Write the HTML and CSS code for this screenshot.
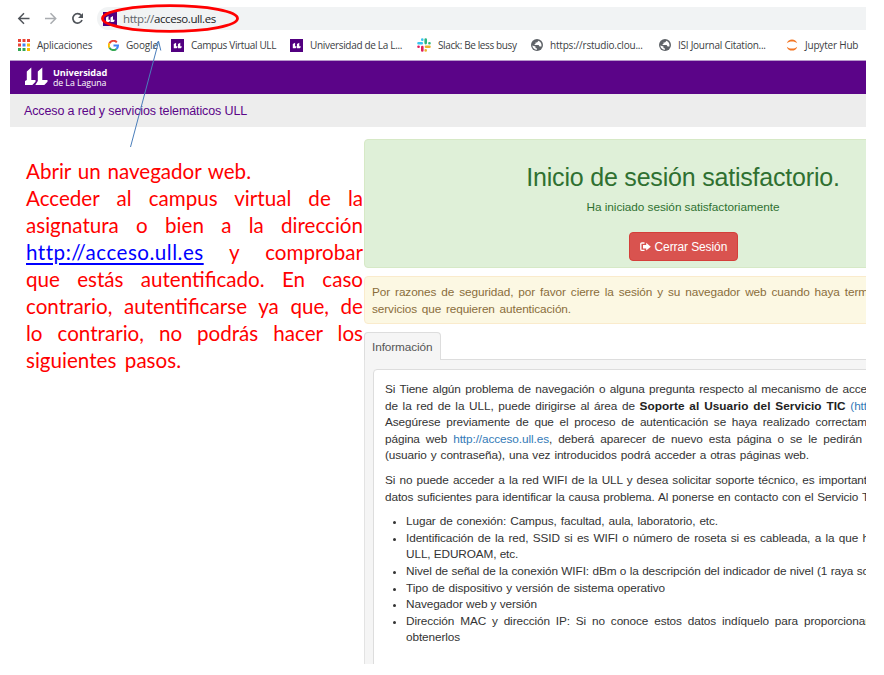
FILE: index.html
```html
<!DOCTYPE html>
<html lang="es">
<head>
<meta charset="utf-8">
<title>Acceso a red y servicios telemáticos ULL</title>
<link rel="stylesheet" href="styles.css">
</head>
<body>
<svg class="defs" width="0" height="0">
  <symbol id="ull" viewBox="0 0 14 14"><path fill="#520080" d="M0 0h14v14H0z"/><path fill="#fff" d="M5.500 4v3.700H7V9L6 10H3V5.500zM10 4v3.700h1.500V9l-1 1h-3V5.500z"/></symbol>
  <symbol id="globe" viewBox="0 0 12 12"><circle cx="6" cy="6" r="6" fill="#5f6368"/><path fill="#fff" d="M1.300 6.500L4.500 7.500V9L6 9.500v1.200C3.500 10.700 1.500 9 1.300 6.500zM7.500 1.700L6 3.500H4.500v1.500H3.600v1h4l1 1.500h1.800C11 5 9.700 2.500 7.500 1.700z"/></symbol>
</svg>
<div class="screen">
  <div class="toolbar">
    <svg class="nav" width="87" height="24" viewBox="0 0 87 24" fill="none" stroke-width="1.500">
      <path stroke="#50545a" d="M19.500 11.500H9M14 6.300l-5.200 5.200 5.200 5.200"/>
      <path stroke="#a9acb0" d="M35 11.500h10.500M40.500 6.300l5.200 5.200-5.200 5.200"/>
      <path stroke="#50545a" stroke-width="1.700" d="M71.300 8.500A4.700 4.700 0 1 0 72 13"/>
      <path fill="#50545a" d="M73 6v5h-5z"/>
    </svg>
    <div class="omnibox"><svg width="14" height="14"><use href="#ull"/></svg><span class="url"><i>http://</i>acceso.ull.es</span></div>
  </div>
  <div class="bookmarks">
    <div class="bm b1"><svg width="12" height="12" viewBox="0 0 12 12"><path fill="#ea4335" d="M0 0h3v3H0zM4.500 0h3v3h-3zM9 0h3v3H9zM0 4.500h3v3H0z"/><path fill="#34a853" d="M0 9h3v3H0zM4.500 9h3v3h-3z"/><path fill="#4285f4" d="M4.500 4.500h3v3h-3z"/><path fill="#fbbc05" d="M9 4.500h3v3H9zM9 9h3v3H9z"/></svg><span>Aplicaciones</span></div>
    <div class="bm b2"><svg width="11" height="11" viewBox="0 0 11 11" fill="none" stroke-width="2"><path stroke="#ea4335" d="M1.400 3.400A4.500 4.500 0 0 1 8.800 2.300"/><path stroke="#fbbc05" d="M1.400 3.300a4.500 4.500 0 0 0 0 4.400"/><path stroke="#34a853" d="M1.400 7.600a4.500 4.500 0 0 0 7 1.300"/><path stroke="#4285f4" d="M5.500 5.600h4.500a4.500 4.500 0 0 1-1.600 3.300"/></svg><span>Google</span></div>
    <div class="bm b3"><svg width="13" height="13"><use href="#ull"/></svg><span>Campus Virtual ULL</span></div>
    <div class="bm b4"><svg width="13" height="13"><use href="#ull"/></svg><span>Universidad de La L...</span></div>
    <div class="bm b5"><svg width="14" height="14" viewBox="0 0 14 14" fill="none" stroke-width="2.600" stroke-linecap="round"><path stroke="#36c5f0" d="M1.500 5.300h3.300M5.300 1.600v.1"/><path stroke="#2eb67d" d="M8.700 1.500v3.600M12.400 5.300h.1"/><path stroke="#ecb22e" d="M9 8.800h3.500M8.700 12.400v.1"/><path stroke="#e01e5a" d="M5.300 9v3.500M1.500 8.800h.1"/></svg><span>Slack: Be less busy</span></div>
    <div class="bm b6"><svg width="12" height="12"><use href="#globe"/></svg><span>https://rstudio.clou...</span></div>
    <div class="bm b7"><svg width="12" height="12"><use href="#globe"/></svg><span>ISI Journal Citation...</span></div>
    <div class="bm b8"><svg width="12" height="12" viewBox="0 0 12 12" fill="#f37726"><path d="M.8 4.300C2-.9 10-.9 11.200 4.300 8.500 1.800 3.500 1.800.8 4.300zM.8 7.700C2 12.900 10 12.900 11.200 7.700 8.500 10.200 3.500 10.200.8 7.700z"/></svg><span>Jupyter Hub</span></div>
  </div>
  <header class="brand">
    <svg width="24" height="19" viewBox="0 0 24 19" fill="#fff"><path d="M7.300 .5V13H11.500v1.800L8.300 18H1V14L2.800 13V4.500zM18.300 .5V13H23.500v1.800L20.300 18H11.300L13.800 14V4.500z"/></svg>
    <div class="brandname"><b>Universidad</b><span>de La Laguna</span></div>
  </header>
  <div class="subbar"><span>Acceso a red y servicios telemáticos ULL</span></div>
  <main>
    <aside class="note">
      <p class="n1">Abrir un navegador web.</p>
      <p>Acceder al campus virtual de la</p>
      <p>asignatura o bien a la dirección</p>
      <p><a>http://acceso.ull.es</a> y comprobar</p>
      <p>que estás autentificado. En caso</p>
      <p>contrario, autentificarse ya que, de</p>
      <p>lo contrario, no podrás hacer los</p>
      <p class="n2">siguientes pasos.</p>
    </aside>
    <section class="content">
      <div class="success">
        <h1>Inicio de sesión satisfactorio.</h1>
        <div class="sub">Ha iniciado sesión satisfactoriamente</div>
        <div class="btn"><svg width="11" height="10" viewBox="0 0 11 10"><path fill="none" stroke="#fff" stroke-width="1.300" d="M4.500 1H2Q.8 1 .8 2.200v5Q.8 8.400 2 8.400h2.500"/><path fill="#fff" d="M3 3h3.200V.8L10.800 4.700 6.200 8.600V6.400H3z"/></svg><span>Cerrar Sesión</span></div>
      </div>
      <div class="warning">
        <p>Por razones de seguridad, por favor cierre la sesión y su navegador web cuando haya term</p>
        <p class="w2">servicios que requieren autenticación.</p>
      </div>
      <div class="tabs"><div class="tab"><span>Información</span></div><div class="rule"></div></div>
      <div class="well"><div class="panel">
        <div class="para">
          <p>Si Tiene algún problema de navegación o alguna pregunta respecto al mecanismo de acce</p>
          <p>de la red de la ULL, puede dirigirse al área de <b>Soporte al Usuario del Servicio TIC</b> <a>(htt</a></p>
          <p>Asegúrese previamente de que el proceso de autenticación se haya realizado correctam</p>
          <p class="short">página web <a>http://acceso.ull.es</a>, deberá aparecer de nuevo esta página o se le pedirán</p>
          <p class="i1">(usuario y contraseña), una vez introducidos podrá acceder a otras páginas web.</p>
        </div>
        <div class="para">
          <p>Si no puede acceder a la red WIFI de la ULL y desea solicitar soporte técnico, es important</p>
          <p class="wide">datos suficientes para identificar la causa problema. Al ponerse en contacto con el Servicio T</p>
        </div>
        <ul>
          <li><p class="l1">Lugar de conexión: Campus, facultad, aula, laboratorio, etc.</p></li>
          <li><p class="wide">Identificación de la red, SSID si es WIFI o número de roseta si es cableada, a la que h</p><p class="l2">ULL, EDUROAM, etc.</p></li>
          <li><p class="wide">Nivel de señal de la conexión WIFI: dBm o la descripción del indicador de nivel (1 raya so</p></li>
          <li><p class="l3">Tipo de dispositivo y versión de sistema operativo</p></li>
          <li><p class="l4">Navegador web y versión</p></li>
          <li><p class="wide">Dirección MAC y dirección IP: Si no conoce estos datos indíquelo para proporcionar</p><p class="l5">obtenerlos</p></li>
        </ul>
      </div></div>
    </section>
  </main>
</div>
<svg class="annotation" width="884" height="160" viewBox="0 0 884 160" fill="none">
  <ellipse cx="170" cy="18.500" rx="67.500" ry="12.800" stroke="#f00" stroke-width="2.800"/>
  <path stroke="#4a7ebb" d="M130.500 147L158.500 42M153 49l5.500-8 2.300 9.500"/>
</svg>
</body>
</html>
```

FILE: styles.css
```css
* { box-sizing: border-box; }
body { margin: 0; background: #fff; font-family: "Liberation Sans", Arial, sans-serif; font-size: 11.800px; color: #333; }
p, h1, ul { margin: 0; padding: 0; }
p { white-space: nowrap; text-align: justify; text-align-last: justify; }
.content { letter-spacing: -.1px; }
.defs, .annotation { position: absolute; left: 0; top: 0; pointer-events: none; }
.screen { margin-left: 10px; width: 856px; height: 664px; overflow: hidden; }
.toolbar { display: flex; height: 30px; padding-top: 7px; }
.nav { flex: none; }
.omnibox { flex: 1; height: 23px; background: #f1f3f4; border-radius: 12px 0 0 12px; display: flex; align-items: center; gap: 6px; padding-left: 6px; }
.url { font: 11.500px "Open Sans", sans-serif; width: 93px; white-space: nowrap; color: #202124; letter-spacing: -.4px; }
.url i { font-style: normal; color: #5f6368; }
.bookmarks { display: flex; height: 30px; font: 10px "Open Sans", sans-serif; letter-spacing: -.17px; color: #3c4043; }
.bm { flex: none; display: flex; align-items: center; gap: 7px; padding-left: 8px; white-space: nowrap; }
.b1 { width: 90px; letter-spacing: -.2px; }
.b2 { width: 63px; }
.b3 { width: 119px; letter-spacing: -.35px; }
.b4 { width: 127px; letter-spacing: -.32px; }
.b5 { width: 114px; letter-spacing: -.38px; }
.b6 { width: 128px; letter-spacing: -.2px; }
.b7 { width: 127px; letter-spacing: -.25px; }
.b8 { width: 88px; letter-spacing: -.2px; }
.brand { display: flex; gap: 5px; height: 34px; background: #5b0488; border-top: 1px solid #b89acb; padding: 6px 0 0 14px; color: #fff; }
.brandname { display: flex; flex-direction: column; font: 9.200px/11px "Open Sans", sans-serif; letter-spacing: -.08px; }
.brandname span { font-size: 8.800px; }
.subbar { height: 33px; background: #ededed; padding-left: 14px; font-size: 12.500px; line-height: 34px; letter-spacing: -.12px; color: #5b0488; }
main { display: grid; grid-template-columns: 354px 502px; }
.note { padding: 31px 0 0 16px; font: 20.600px/27px Lato, sans-serif; color: #f00; }
.note p { width: 337px; }
.note a { color: #00f; letter-spacing: .5px; text-decoration: underline; text-decoration-thickness: 2px; text-underline-offset: 3px; }
.note .n1 { width: 225px; }
.note .n2 { width: 155px; }
.content { padding-top: 12px; }
.success { width: 638px; height: 129px; background: #dff0d8; border: 1px solid #d6e9c6; border-radius: 4px; color: #2f7031; display: flex; flex-direction: column; align-items: center; }
h1 { font-size: 25px; line-height: 28px; font-weight: 400; margin-top: 23px; letter-spacing: -.2px; }
.sub { margin-top: 8px; line-height: 16px; letter-spacing: -.05px; }
.btn { margin-top: 17px; width: 109px; height: 29px; border-radius: 4px; background: #d9534f; border: 1px solid #d43f3a; color: #fff; display: flex; align-items: center; padding-left: 10px; gap: 4px; white-space: nowrap; font-size: 12px; }
.warning { width: 638px; height: 48px; margin-top: 8px; background: #fcf8e3; border: 1px solid #faebcc; border-radius: 4px; color: #8a6d3b; padding: 7px; line-height: 16.600px; }
.warning p { width: 496px; }
.warning .w2 { width: 199px; }
.tabs { display: flex; height: 28px; margin-top: 8px; }
.tab { width: 77px; background: #f5f5f5; border: 1px solid #ddd; border-bottom: 0; border-radius: 4px 4px 0 0; line-height: 28px; padding-left: 7px; color: #555; }
.rule { flex: 1; border-bottom: 1px solid #ddd; }
.well { background: #f5f5f5; border-left: 1px solid #e3e3e3; padding: 9px 0 0 8px; }
.panel { height: 310px; width: 620px; background: #fff; border: 1px solid #ddd; border-radius: 4px 0 0 0; padding: 11px 0 0 11px; line-height: 16.600px; }
.panel p { width: 482px; }
.panel .short { width: 477px; }
.panel .wide { width: 484px; }
.panel .i1 { width: 424px; }
.para { margin-bottom: 8px; }
.panel a { color: #337ab7; }
.panel b { color: #222; letter-spacing: .05px; }
ul { list-style-position: outside; margin-left: 21px; }
li::marker { font-size: 11px; }
.panel li p { width: 461px; }
.panel li .wide { width: 463px; }
.panel li .l1 { width: 312px; }
.panel li .l2 { width: 110px; }
.panel li .l3 { width: 259px; }
.panel li .l4 { width: 131px; }
.panel li .l5 { width: 56px; }
```
